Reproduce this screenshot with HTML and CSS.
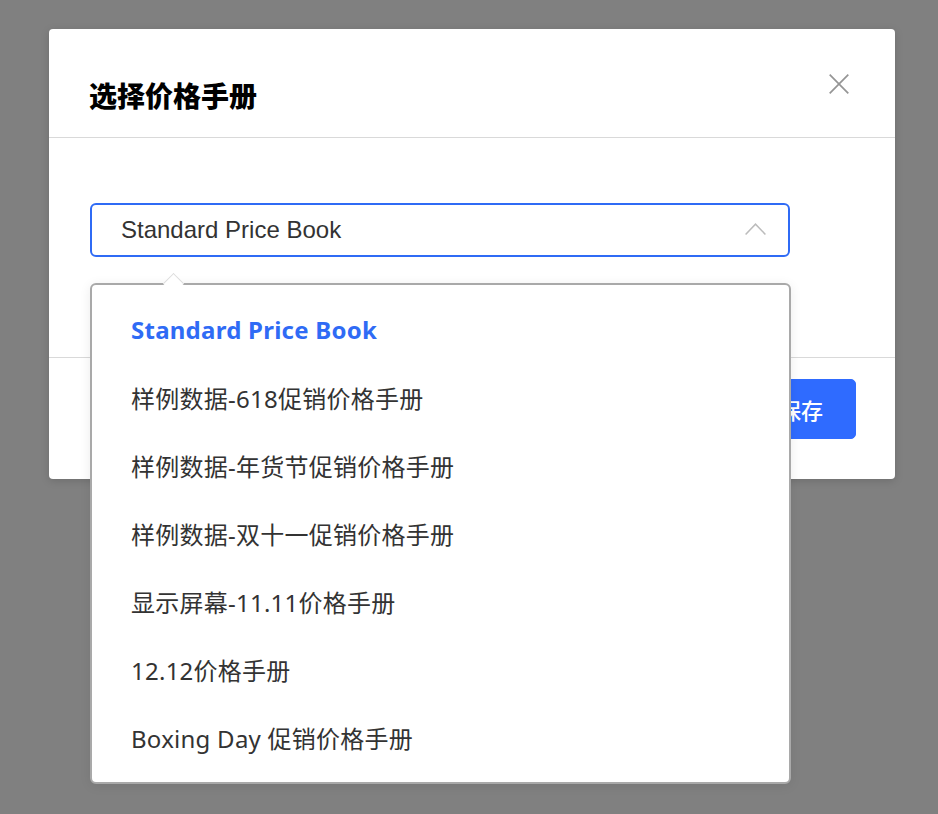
FILE: index.html
```html
<!DOCTYPE html>
<html lang="zh">
<head>
<meta charset="utf-8">
<link rel="stylesheet" href="styles.css">
</head>
<body>
<div class="modal">
  <div class="modal-header">
    <h2 class="modal-title">选择价格手册</h2>
    <button class="close" aria-label="关闭">
      <svg width="20" height="20" viewBox="0 0 20 20"><path d="M0.7 0.7 L19.3 19.3 M19.3 0.7 L0.7 19.3" stroke="#959595" stroke-width="1.7" fill="none"/></svg>
    </button>
  </div>
  <div class="modal-body">
    <div class="select-wrap">
      <div class="select">
        <span class="select-value">Standard Price Book</span>
        <svg class="chevron" width="21" height="12" viewBox="0 0 21 12"><path d="M0.6 11.4 L10.5 1.2 L20.4 11.4" stroke="#bcbcbc" stroke-width="1.5" fill="none"/></svg>
      </div>
      <div class="dropdown">
        <span class="caret"></span>
        <ul class="options">
          <li class="option selected">Standard Price Book</li>
          <li class="option">样例数据-618促销价格手册</li>
          <li class="option">样例数据-年货节促销价格手册</li>
          <li class="option">样例数据-双十一促销价格手册</li>
          <li class="option">显示屏幕-11.11价格手册</li>
          <li class="option">12.12价格手册</li>
          <li class="option">Boxing Day 促销价格手册</li>
        </ul>
      </div>
    </div>
  </div>
  <div class="modal-footer">
    <button class="btn">取消</button>
    <button class="btn btn-primary">保存</button>
  </div>
</div>
</body>
</html>
```

FILE: styles.css
```css
html, body {
  margin: 0;
  padding: 0;
}
body {
  background: #808080;
  font-family: "Noto Sans", "Noto Sans CJK SC", sans-serif;
  height: 814px;
  overflow: hidden;
}
.modal {
  margin: 29px 0 0 49px;
  width: 846px;
  background: #fff;
  border-radius: 4px;
  box-shadow: 0 2px 8px rgba(0,0,0,0.15);
}
.modal-header {
  box-sizing: content-box;
  height: 63px;
  padding: 45px 46px 0 40px;
  border-bottom: 1px solid #d9d9d9;
  display: flex;
  align-items: flex-start;
  justify-content: space-between;
}
.modal-title {
  margin: 6px 0 0 0;
  font-family: "Noto Sans CJK SC", sans-serif;
  font-weight: 900;
  font-size: 28px;
  line-height: 30px;
  color: #000;
}
.close {
  border: 0;
  background: none;
  padding: 0;
  width: 20px;
  height: 20px;
  display: flex;
}
.modal-body {
  height: 220px;
  padding: 65px 40px 0 41px;
  box-sizing: border-box;
  border-bottom: 1px solid #d9d9d9;
}
.select-wrap {
  position: relative;
  width: 700px;
}
.select {
  height: 54px;
  box-sizing: border-box;
  border: 2px solid #2f6bf5;
  border-radius: 6px;
  display: flex;
  align-items: center;
  justify-content: space-between;
  padding: 0 22px 0 29px;
}
.select-value {
  font-family: "Liberation Sans", Arial, sans-serif;
  font-size: 24px;
  color: #333;
}
.chevron {
  margin-top: -2px;
}
.dropdown {
  position: absolute;
  top: 80px;
  left: 0;
  width: 701px;
  box-sizing: border-box;
  background: #fff;
  border: 2px solid #a9a9a9;
  border-radius: 6px;
  box-shadow: 0 2px 12px rgba(0,0,0,0.08);
  z-index: 10;
}
.caret {
  position: absolute;
  top: -9.5px;
  left: 74px;
  width: 15px;
  height: 15px;
  box-sizing: border-box;
  background: #fff;
  border-left: 1px solid #dcdcdc;
  border-top: 1px solid #dcdcdc;
  transform: rotate(45deg);
}
.options {
  list-style: none;
  margin: 0;
  padding: 10px 0 11px;
}
.option {
  height: 68px;
  display: flex;
  align-items: center;
  padding-left: 39px;
  font-size: 24px;
  letter-spacing: 0.25px;
  color: #333;
}
.option.selected {
  color: #2f6bf5;
  font-weight: 700;
}
.modal-footer {
  height: 121px;
  box-sizing: border-box;
  padding: 21px 39px 0 40px;
  display: flex;
  justify-content: flex-end;
  gap: 16px;
}
.btn {
  height: 60px;
  width: 110px;
  border-radius: 5px;
  border: 1px solid #d0d0d0;
  background: #fff;
  font-family: "Noto Sans CJK SC", sans-serif;
  font-size: 22px;
  color: #333;
}
.btn-primary {
  background: #2f6bff;
  border-color: #2f6bff;
  color: #fff;
  font-weight: 500;
}
```
